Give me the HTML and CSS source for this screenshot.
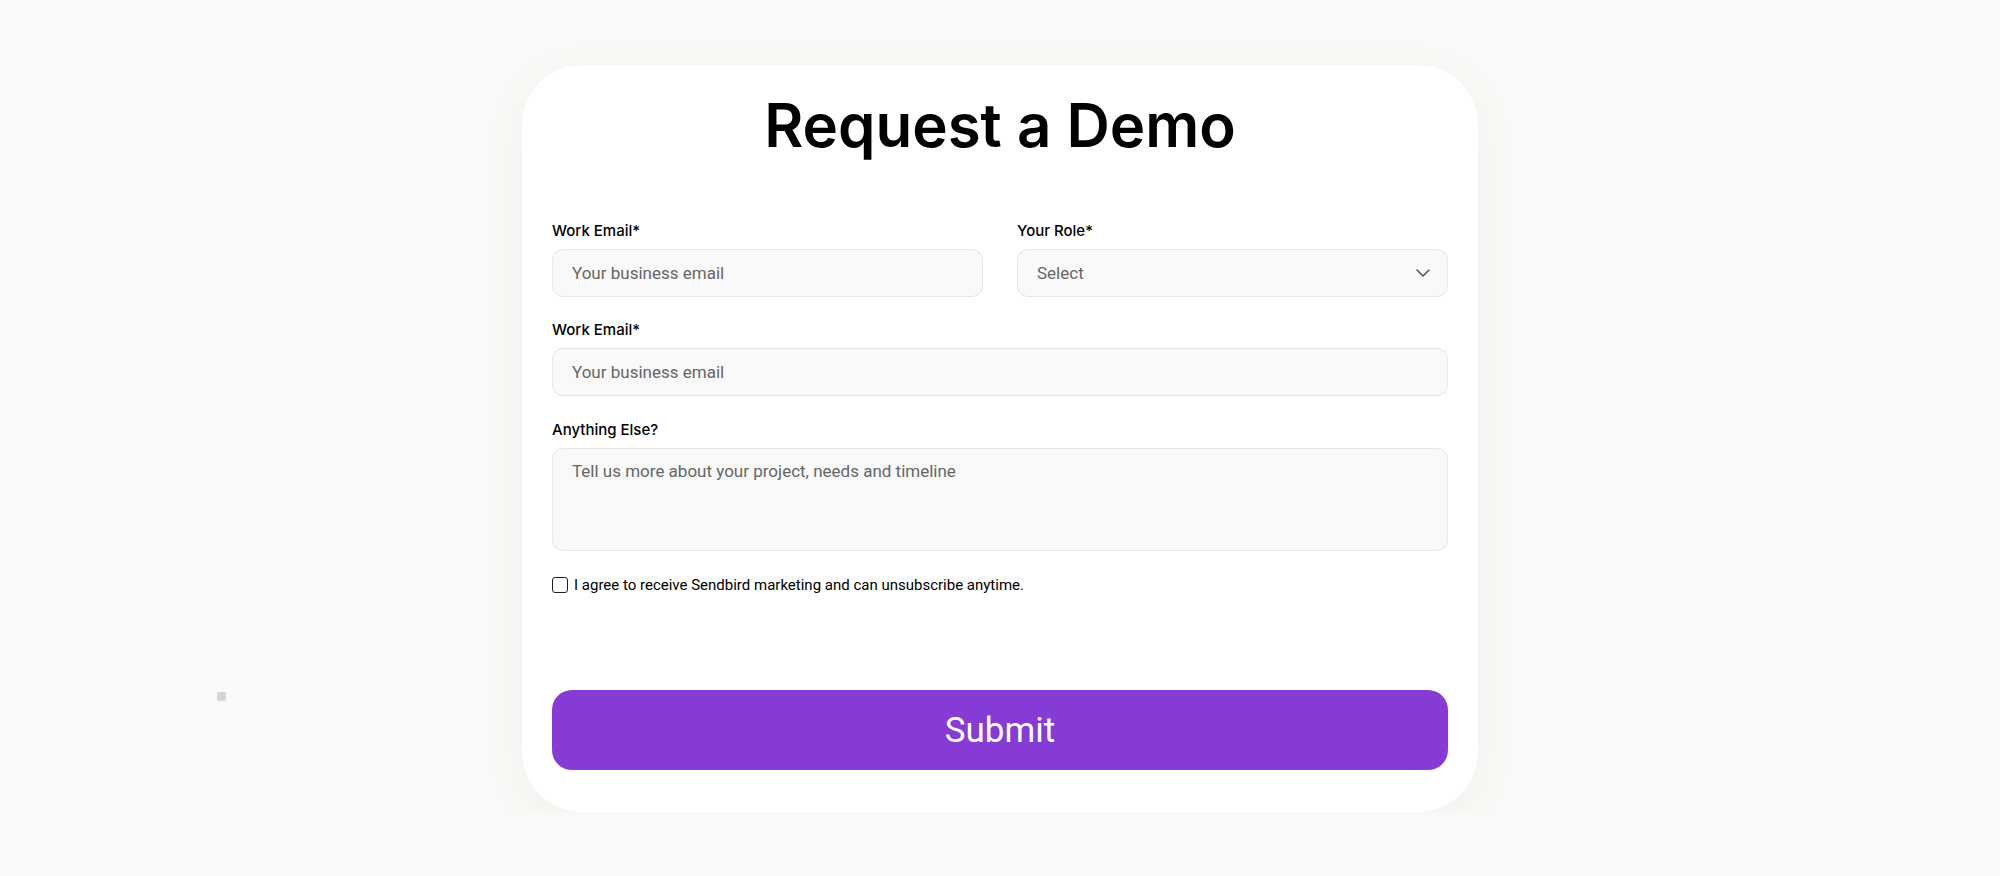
FILE: index.html
```html
<!DOCTYPE html>
<html lang="en">
<head>
    <meta charset="UTF-8">
    <title>Request a Demo</title>
    <link rel="stylesheet" href="styles.css">
</head>
<body>
    <div class="corner-dot"></div>
    <main class="page">
        <form class="demo-card" onsubmit="return false">
            <h1 class="demo-title">Request a Demo</h1>

            <div class="field-row">
                <div class="field">
                    <label for="email1">Work Email*</label>
                    <input type="email" id="email1" placeholder="Your business email">
                </div>
                <div class="field">
                    <label for="role">Your Role*</label>
                    <div class="select-wrap">
                        <select id="role">
                            <option>Select</option>
                            <option>Engineering</option>
                            <option>Product</option>
                            <option>Other</option>
                        </select>
                        <svg class="chevron" width="14" height="8" viewBox="0 0 14 8" fill="none">
                            <path d="M1 1l6 6 6-6" stroke="#555" stroke-width="1.5" stroke-linecap="round" stroke-linejoin="round"/>
                        </svg>
                    </div>
                </div>
            </div>

            <div class="field">
                <label for="email2">Work Email*</label>
                <input type="email" id="email2" placeholder="Your business email">
            </div>

            <div class="field">
                <label for="notes">Anything Else?</label>
                <textarea id="notes" placeholder="Tell us more about your project, needs and timeline"></textarea>
            </div>

            <label class="agree">
                <input type="checkbox">
                <span>I agree to receive Sendbird marketing and can unsubscribe anytime.</span>
            </label>

            <button type="submit" class="submit-btn">Submit</button>
        </form>
    </main>
</body>
</html>
```

FILE: styles.css
```css
body {
    margin: 0;
    background-color: #faf9f7;
    font-family: "Roboto", "Liberation Sans", sans-serif;
    color: #000;
}
.page {
    display: flex;
    justify-content: center;
    padding-top: 65px;
}
.demo-card {
    width: 956px;
    box-sizing: border-box;
    padding: 24px 30px 42px;
    background-color: #fff;
    border-radius: 60px;
    box-shadow: 0 10px 40px rgba(120, 110, 90, 0.06);
    display: flex;
    flex-direction: column;
    gap: 24px;
}
.demo-title {
    margin: 0 0 36px;
    font-family: "Inter", sans-serif;
    font-size: 60px;
    line-height: 72px;
    font-weight: 600;
    text-align: center;
}
.field-row {
    display: grid;
    grid-template-columns: 1fr 1fr;
    gap: 34px;
    margin-bottom: -1px;
}
.field {
    display: flex;
    flex-direction: column;
    gap: 8px;
}
.field label {
    font-family: "Inter", sans-serif;
    font-size: 15px;
    line-height: 20px;
    font-weight: 500;
}
.field input,
.field select,
.field textarea {
    box-sizing: border-box;
    width: 100%;
    height: 48px;
    padding: 0 19px;
    border: 1px solid #e6e6e6;
    border-radius: 11px;
    background-color: #f9f9f9;
    font-family: "Roboto", sans-serif;
    font-size: 17px;
    color: #666;
    outline: none;
}
.field input::placeholder,
.field textarea::placeholder {
    color: #666;
}
.select-wrap {
    position: relative;
}
.field select {
    appearance: none;
    -webkit-appearance: none;
}
.chevron {
    position: absolute;
    right: 18px;
    top: 20px;
    pointer-events: none;
}
.field textarea {
    height: 103px;
    padding-top: 10px;
    line-height: 24px;
    resize: none;
}
.agree {
    display: flex;
    align-items: center;
    gap: 6px;
    margin-bottom: 71px;
    font-size: 15px;
    line-height: 20px;
    cursor: pointer;
}
.agree input {
    appearance: none;
    -webkit-appearance: none;
    margin: 0;
    width: 16px;
    height: 16px;
    border: 1.5px solid #222;
    border-radius: 3px;
    background: #fff;
}
.submit-btn {
    height: 80px;
    border: none;
    border-radius: 20px;
    background-color: #863bd5;
    color: #fff;
    font-family: "Roboto", sans-serif;
    font-size: 35px;
    cursor: pointer;
}
.corner-dot {
    position: absolute;
    left: 217px;
    top: 692px;
    width: 9px;
    height: 9px;
    border-radius: 2px;
    background-color: #d6d6d6;
}
```
